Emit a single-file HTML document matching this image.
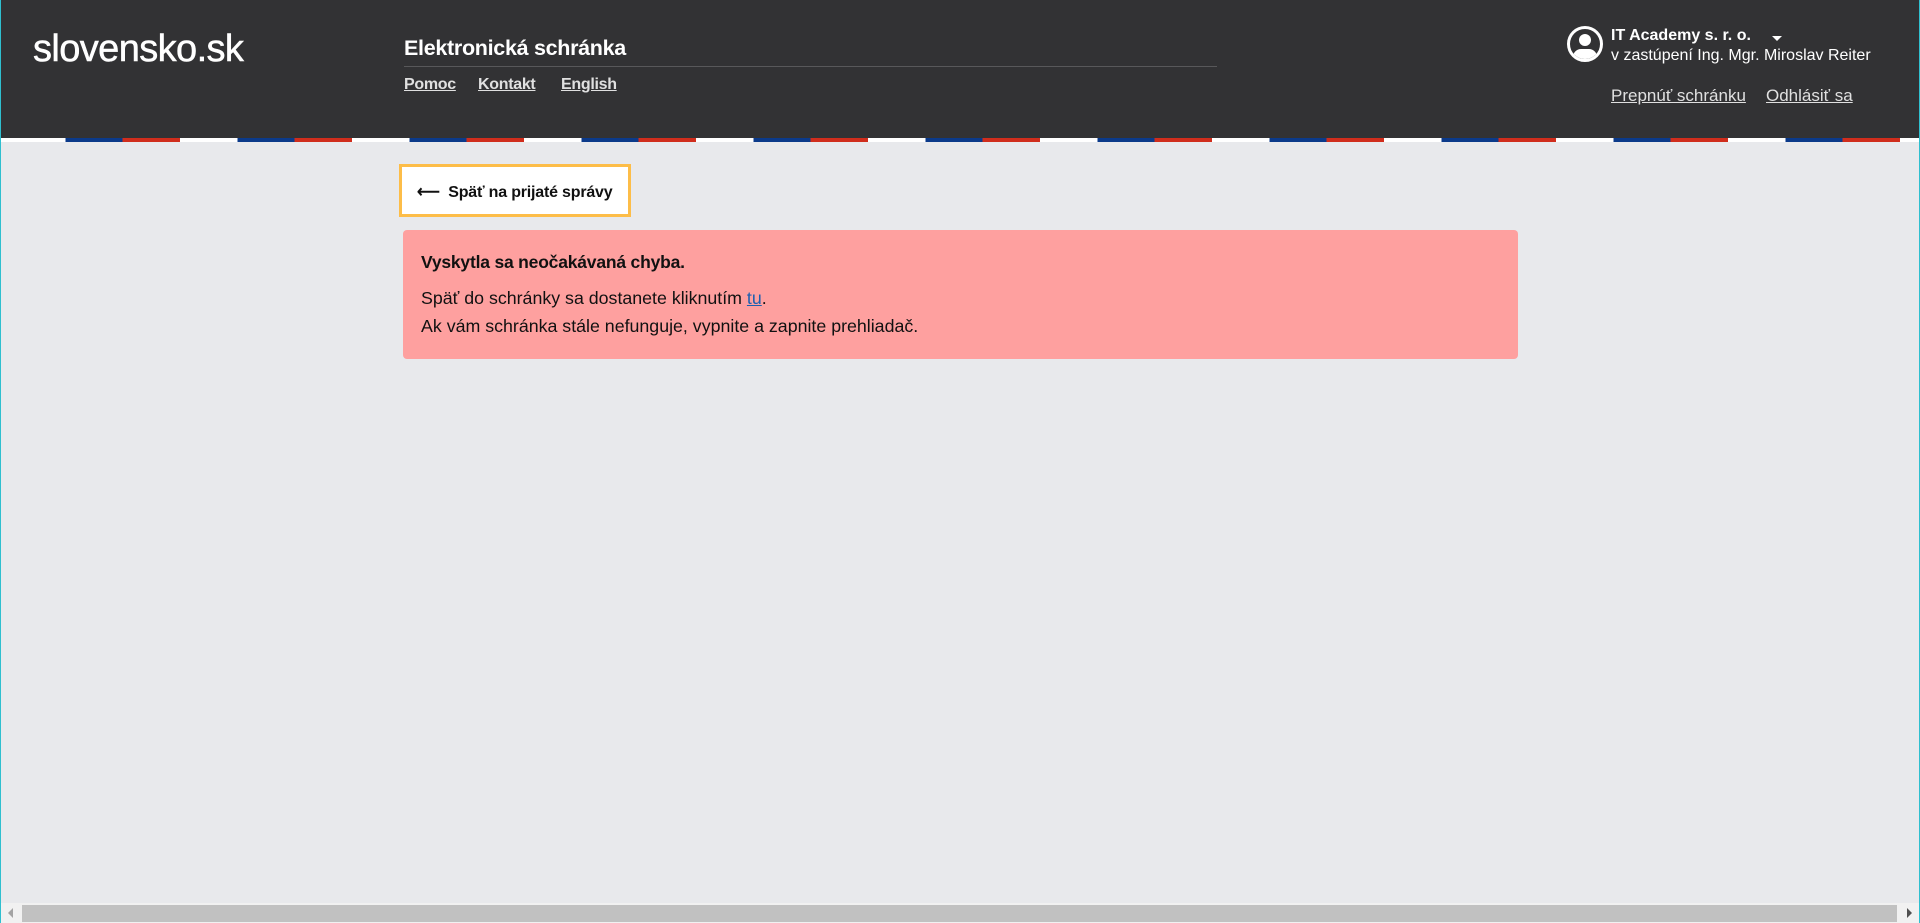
<!DOCTYPE html>
<html><head><meta charset="utf-8"><style>
*{margin:0;padding:0;box-sizing:border-box}
html,body{width:1920px;height:923px;overflow:hidden;background:#e8e9ec;font-family:"Liberation Sans",sans-serif}
.hdr{position:absolute;left:0;top:0;width:1920px;height:138px;background:#323234}
.stripe{position:absolute;left:0;top:138px;width:1920px;height:4px;background:repeating-linear-gradient(90deg,#fff 0 57.33px,#0b3a8a 57.33px 114.67px,#d02d1c 114.67px 172px);background-position:8px 0}
.logo{position:absolute;left:33px;top:28px;color:#fff;font-size:38px;letter-spacing:-0.6px;-webkit-text-stroke:0.5px #fff}
.title{position:absolute;left:404px;top:36px;color:#fff;font-size:21.5px;font-weight:bold;letter-spacing:-0.3px}
.line{position:absolute;left:404px;top:66px;width:813px;height:1px;background:#58585a}
.nav{position:absolute;top:76px;color:#e0e0e0;font-size:16px;font-weight:bold;text-decoration:underline;letter-spacing:-0.3px}
.av{position:absolute;left:1567px;top:26px;width:36px;height:36px;border:3px solid #fff;border-radius:50%;overflow:hidden}
.av i{position:absolute;left:9px;top:5px;width:12px;height:12px;border-radius:50%;background:#fff}
.av b{position:absolute;left:3px;top:20px;width:24px;height:14px;border-radius:8px 8px 0 0;background:#fff}
.org{position:absolute;left:1611px;top:27px;color:#fff;font-size:16px;font-weight:bold}
.caret{position:absolute;left:1772px;top:36px;border-left:5px solid transparent;border-right:5px solid transparent;border-top:5px solid #fff}
.rep{position:absolute;left:1611px;top:47px;color:#fff;font-size:16px}
.rl{position:absolute;top:86px;color:#e0e0e0;font-size:17px;text-decoration:underline}
.btn{position:absolute;left:399px;top:164px;width:232px;height:53px;background:#fff;border:3px solid #fdbd48;font-size:16px;font-weight:bold;color:#111;padding:15px 0 0 15px;letter-spacing:-0.2px}
.alert{position:absolute;left:403px;top:230px;width:1115px;height:129px;background:#fea09f;border-radius:4px;padding:22px 18px;color:#111;font-size:17.8px}
.alert h4{font-size:17.5px;margin-bottom:11px;letter-spacing:-0.2px}
.alert p{line-height:28px}
.alert a{color:#1d5fb0}
.sb{position:absolute;left:0;top:903px;width:1920px;height:20px;background:#f1f1f1}
.th{position:absolute;left:22px;top:905px;width:1875px;height:17px;background:#c1c1c1}
.edge{position:absolute;top:0;width:1px;height:923px;background:#2fbfcf}
</style></head><body>
<div class="hdr"></div><div class="stripe"></div>
<div class="logo">slovensko.sk</div>
<div class="title">Elektronická schránka</div>
<div class="line"></div>
<div class="nav" style="left:404px">Pomoc</div>
<div class="nav" style="left:478px">Kontakt</div>
<div class="nav" style="left:561px">English</div>
<div class="av"><i></i><b></b></div>
<div class="org">IT Academy s. r. o.</div>
<div class="caret"></div>
<div class="rep">v zastúpení Ing. Mgr. Miroslav Reiter</div>
<div class="rl" style="left:1611px">Prepnúť schránku</div>
<div class="rl" style="left:1766px">Odhlásiť sa</div>
<div class="btn">⟵&nbsp; Späť na prijaté správy</div>
<div class="alert"><h4>Vyskytla sa neočakávaná chyba.</h4><p>Späť do schránky sa dostanete kliknutím <a href="#">tu</a>.<br>Ak vám schránka stále nefunguje, vypnite a zapnite prehliadač.</p></div>
<div class="sb"></div><div class="th"></div>
<div style="position:absolute;left:8px;top:908px;border-right:5px solid #a3a3a3;border-top:5px solid transparent;border-bottom:5px solid transparent"></div>
<div style="position:absolute;left:1907px;top:908px;border-left:5px solid #505050;border-top:5px solid transparent;border-bottom:5px solid transparent"></div>
<div class="edge" style="left:0"></div><div class="edge" style="left:1919px"></div>
</body></html>
